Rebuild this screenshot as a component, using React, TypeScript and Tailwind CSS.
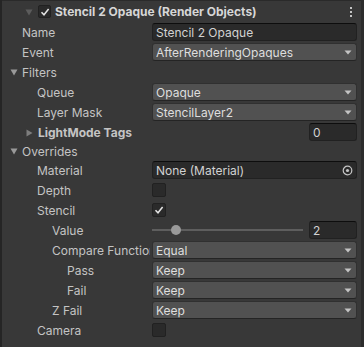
import React from "react";

const font = { fontFamily: "Inter, 'Noto Sans', sans-serif" };

function Arrow() {
  return (
    <svg width="8" height="5" viewBox="0 0 8 5" className="shrink-0">
      <path d="M0.5 0.5 L7.5 0.5 L4 4.5 Z" fill="#c4c4c4" />
    </svg>
  );
}

function Dropdown({ text }: { text: string }) {
  return (
    <div className="flex-1 h-[18px] rounded-[3px] bg-[#515151] border border-[#303030] border-b-[#242424] flex items-center pl-[3px] pr-[4px] text-[#dedede] overflow-hidden">
      <span className="flex-1 whitespace-nowrap overflow-hidden pt-[1px]">{text}</span>
      <Arrow />
    </div>
  );
}

function TextField({ text, className = "flex-1" }: { text: string; className?: string }) {
  return (
    <div className={`${className} h-[18px] rounded-[3px] bg-[#2a2a2a] border border-[#212121] border-t-[#0d0d0d] flex items-center pl-[3px] pt-[1px] text-[#d2d2d2] whitespace-nowrap overflow-hidden`}>
      {text}
    </div>
  );
}

function Checkbox({ checked, size = "w-[14px] h-[14px]" }: { checked?: boolean; size?: string }) {
  return (
    <div className={`${size} rounded-[2px] bg-[#2a2a2a] border border-[#212121] flex items-center justify-center`}>
      {checked && (
        <svg width="10" height="10" viewBox="0 0 10 10">
          <path d="M1.5 5.2 L4 7.8 L8.6 2" stroke="#e4e4e4" strokeWidth="1.5" fill="none" />
        </svg>
      )}
    </div>
  );
}

function Row({
  label,
  indent,
  children,
  bold,
  fold,
  h = "h-[20px]",
}: {
  label: string;
  indent: number;
  children?: React.ReactNode;
  bold?: boolean;
  fold?: "open" | "closed";
  h?: string;
}) {
  return (
    <div className={`flex items-center ${h} pr-[4px]`}>
      <div
        className={`relative w-[148px] shrink-0 whitespace-nowrap overflow-hidden text-[#c4c4c4] pt-[1px] ${bold ? "font-bold" : ""}`}
        style={{ paddingLeft: indent }}
      >
        {fold === "open" && (
          <svg width="8" height="7" viewBox="0 0 8 7" className="absolute top-[4px]" style={{ left: indent - 12 }}>
            <path d="M0.5 0.5 L7.5 0.5 L4 6.5 Z" fill="#999999" />
          </svg>
        )}
        {fold === "closed" && (
          <svg width="7" height="8" viewBox="0 0 7 8" className="absolute top-[4px]" style={{ left: indent - 12 }}>
            <path d="M0.5 0.5 L6.5 4 L0.5 7.5 Z" fill="#7d7d7d" />
          </svg>
        )}
        {label}
      </div>
      <div className="flex-1 flex items-center ml-[2px]">{children}</div>
    </div>
  );
}

export default function App() {
  return (
    <div
      className="w-[364px] h-[347px] bg-[#383838] text-[12px] leading-[14px] border-l-2 border-l-[#252525] border-r-[3px] border-r-[#2c2c2c] overflow-hidden"
      style={font}
    >
      {/* Header */}
      <div className="relative flex items-center h-[22px] border-t border-t-[#2a2a2a] pr-[6px]">
        <svg width="8" height="7" viewBox="0 0 8 7" className="absolute left-[23px] top-[8px]">
          <path d="M0.5 0.5 L7.5 0.5 L4 6.5 Z" fill="#5c5c5c" />
        </svg>
        <div className="ml-[36px]">
          <Checkbox checked size="w-[13px] h-[13px]" />
        </div>
        <span className="ml-[4px] pt-[1px] font-bold text-[#d6d6d6] whitespace-nowrap">
          Stencil 2 Opaque (Render Objects)
        </span>
        <div className="ml-auto mr-[3px] flex flex-col gap-[2px]">
          <div className="w-[2px] h-[2px] bg-[#c4c4c4]" />
          <div className="w-[2px] h-[2px] bg-[#c4c4c4]" />
          <div className="w-[2px] h-[2px] bg-[#c4c4c4]" />
        </div>
      </div>

      <Row label="Name" indent={20}>
        <TextField text="Stencil 2 Opaque" />
      </Row>
      <Row label="Event" indent={20}>
        <Dropdown text="AfterRenderingOpaques" />
      </Row>
      <Row label="Filters" indent={20} fold="open" />
      <Row label="Queue" indent={35}>
        <Dropdown text="Opaque" />
      </Row>
      <Row label="Layer Mask" indent={35}>
        <Dropdown text="StencilLayer2" />
      </Row>
      <Row label="LightMode Tags" indent={36} bold fold="closed">
        <div className="flex-1" />
        <TextField text="0" className="w-[48px]" />
      </Row>
      <Row label="Overrides" indent={20} fold="open" h="h-[18px]" />
      <Row label="Material" indent={35}>
        <div className="flex-1 h-[18px] rounded-[3px] bg-[#2a2a2a] border border-[#212121] border-t-[#0d0d0d] flex items-center pl-[3px] pr-[3px] text-[#d2d2d2] whitespace-nowrap overflow-hidden">
          <span className="flex-1 pt-[1px]">None (Material)</span>
          <svg width="11" height="11" viewBox="0 0 11 11">
            <circle cx="5.5" cy="5.5" r="4.3" stroke="#c4c4c4" strokeWidth="1.2" fill="none" />
            <circle cx="5.5" cy="5.5" r="1.6" fill="#c4c4c4" />
          </svg>
        </div>
      </Row>
      <Row label="Depth" indent={35}>
        <Checkbox />
      </Row>
      <Row label="Stencil" indent={35}>
        <Checkbox checked />
      </Row>
      <Row label="Value" indent={50}>
        <div className="relative flex-1 h-[18px] flex items-center">
          <div className="w-full h-[2px] bg-[#5e5e5e]" />
          <div className="absolute left-[19px] top-[4px] w-[10px] h-[10px] rounded-full bg-[#999999]" />
        </div>
        <TextField text="2" className="w-[48px] ml-[6px]" />
      </Row>
      <Row label="Compare Function" indent={50}>
        <Dropdown text="Equal" />
      </Row>
      <Row label="Pass" indent={65}>
        <Dropdown text="Keep" />
      </Row>
      <Row label="Fail" indent={65}>
        <Dropdown text="Keep" />
      </Row>
      <Row label="Z Fail" indent={50}>
        <Dropdown text="Keep" />
      </Row>
      <Row label="Camera" indent={35}>
        <Checkbox />
      </Row>
    </div>
  );
}
